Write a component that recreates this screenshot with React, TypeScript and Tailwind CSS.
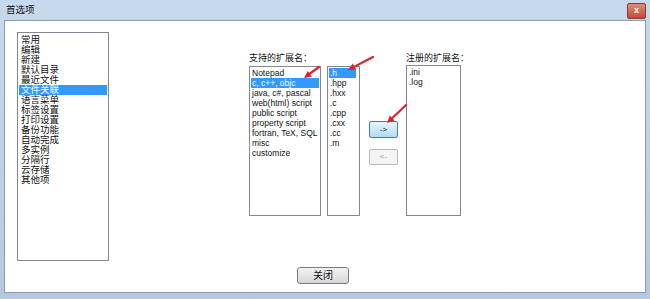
import React from 'react';

const FONT = { fontFamily: '"Liberation Sans", "Noto Sans CJK SC", sans-serif' };

const categories = [
  '常用',
  '编辑',
  '新建',
  '默认目录',
  '最近文件',
  '文件关联',
  '语言菜单',
  '标签设置',
  '打印设置',
  '备份功能',
  '自动完成',
  '多实例',
  '分隔行',
  '云存储',
  '其他项',
];

const languages = [
  'Notepad',
  'c, c++, objc',
  'java, c#, pascal',
  'web(html) script',
  'public script',
  'property script',
  'fortran, TeX, SQL',
  'misc',
  'customize',
];

const extensions = ['.h', '.hpp', '.hxx', '.c', '.cpp', '.cxx', '.cc', '.m'];
const registered = ['.ini', '.log'];

function ListBox({
  items,
  selected,
  className,
  itemClass,
}: {
  items: string[];
  selected?: number;
  className: string;
  itemClass: string;
}) {
  return (
    <div className={`border border-[#828790] bg-white p-[1px] ${className}`}>
      {items.map((it, i) => (
        <div
          key={it}
          className={`whitespace-nowrap ${itemClass} ${
            i === selected ? 'bg-[#3399ff] text-white' : 'text-[#111]'
          }`}
        >
          {it}
        </div>
      ))}
    </div>
  );
}

function RedArrow({ x1, y1, x2, y2 }: { x1: number; y1: number; x2: number; y2: number }) {
  const ang = Math.atan2(y2 - y1, x2 - x1);
  const len = 8;
  const spread = 0.45;
  const ax = x2 - len * Math.cos(ang - spread);
  const ay = y2 - len * Math.sin(ang - spread);
  const bx = x2 - len * Math.cos(ang + spread);
  const by = y2 - len * Math.sin(ang + spread);
  return (
    <g>
      <line x1={x1} y1={y1} x2={x2 - 3 * Math.cos(ang)} y2={y2 - 3 * Math.sin(ang)} stroke="#d9252a" strokeWidth="2.2" strokeLinecap="round" />
      <polygon points={`${x2},${y2} ${ax},${ay} ${bx},${by}`} fill="#d9252a" />
    </g>
  );
}

export default function App() {
  return (
    <div
      className="relative flex h-[299px] w-[650px] flex-col overflow-hidden bg-gradient-to-b from-[#c7d9ec] via-[#bed2e7] to-[#b4c9df]"
      style={FONT}
    >
      {/* title bar */}
      <div className="flex h-[20px] items-center justify-between pl-[6px] pr-[4px]">
        <span className="text-[9.5px] text-[#111]">首选项</span>
        <div className="mt-[1px] flex h-[16px] w-[19px] items-center justify-center rounded-[2px] border border-[#8a3a30] bg-gradient-to-b from-[#e08a78] to-[#c14a36] text-[9px] font-bold leading-none text-white">
          x
        </div>
      </div>

      {/* content */}
      <div className="mx-[4px] mb-[6px] flex flex-1 flex-col border border-[#8d9bab] bg-white">
        <div className="flex pl-[12px] pt-[11px]">
          <ListBox
            items={categories}
            selected={5}
            className="h-[229px] w-[92px] pt-[2px]"
            itemClass="h-[10px] pl-[2px] text-[9.5px] leading-[10px]"
          />

          <div className="ml-[140px] mt-[19px] flex flex-col">
            <div className="h-[15px] text-[9px] leading-[14px] text-[#111]">支持的扩展名：</div>
            <div className="flex">
              <ListBox
                items={languages}
                selected={1}
                className="h-[150px] w-[72px]"
                itemClass="h-[10px] pl-[1px] text-[8.5px] leading-[10px]"
              />
              <ListBox
                items={extensions}
                selected={0}
                className="ml-[6px] h-[150px] w-[33px]"
                itemClass="h-[10px] mr-[2px] pl-[1px] text-[8.5px] leading-[10px]"
              />
            </div>
          </div>

          <div className="ml-[9px] mt-[89px] flex w-[29px] flex-col">
            <div className="flex h-[17px] items-center justify-center rounded-[2px] border border-[#3c7fb1] bg-gradient-to-b from-[#e9f6fd] to-[#b2daf3] text-[8px] text-[#222]">
              -&gt;
            </div>
            <div className="mt-[11px] flex h-[16px] items-center justify-center rounded-[2px] border border-[#b5b9bc] bg-[#f4f4f4] text-[8px] text-[#a6a6a6]">
              &lt;-
            </div>
          </div>

          <div className="ml-[8px] mt-[19px] flex flex-col">
            <div className="h-[14px] text-[9px] leading-[14px] text-[#111]">注册的扩展名：</div>
            <ListBox
              items={registered}
              className="h-[151px] w-[55px]"
              itemClass="h-[10px] pl-[1px] text-[8.5px] leading-[10px]"
            />
          </div>
        </div>

        <div className="ml-[292px] mt-[6px]">
          <div className="flex h-[17px] w-[52px] items-center justify-center rounded-[3px] border border-[#7a7a7a] bg-gradient-to-b from-[#f3f3f3] to-[#d8d8d8] text-[10px] text-[#111]">
            关闭
          </div>
        </div>
      </div>

      {/* red annotation arrows */}
      <svg className="pointer-events-none absolute left-0 top-0" width="650" height="299">
        <RedArrow x1={319} y1={67} x2={304} y2={78} />
        <RedArrow x1={373} y1={57} x2={348} y2={70} />
        <RedArrow x1={406} y1={105} x2={387} y2={123} />
      </svg>
    </div>
  );
}
